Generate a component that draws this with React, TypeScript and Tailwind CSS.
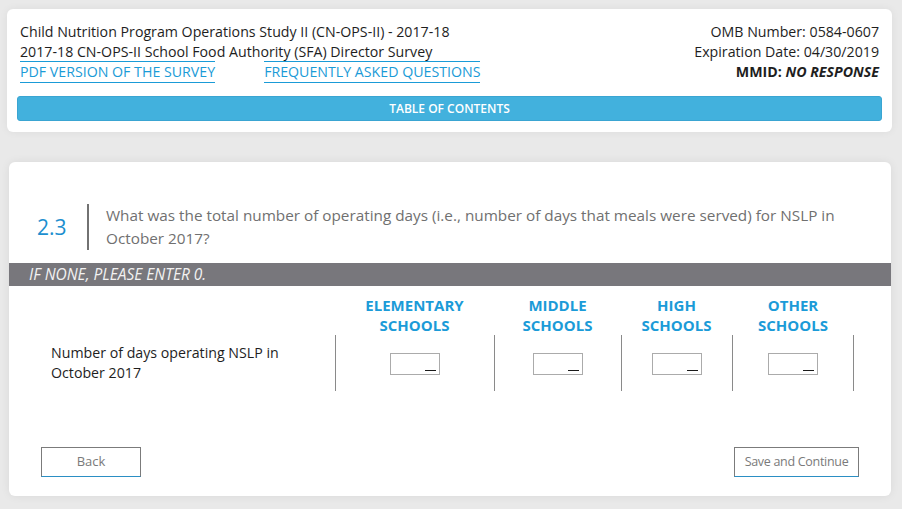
export default function App() {
  const font = { fontFamily: '"Open Sans", "Noto Sans", sans-serif' };
  const columns = [
    { top: "ELEMENTARY", width: "w-[159px]" },
    { top: "MIDDLE", width: "w-[127px]" },
    { top: "HIGH", width: "w-[111px]" },
    { top: "OTHER", width: "w-[122px]" },
  ];

  return (
    <div className="min-h-[509px] bg-[#e9e9e9] pt-[9px] pb-[14px]" style={font}>
      {/* header card */}
      <div className="ml-[7px] mr-[10px] rounded-md bg-white px-[13px] pt-[13px] pb-[11px] shadow-[0_0_8px_rgba(0,0,0,0.06)]">
        <div className="flex justify-between text-[14.2px] leading-[20px] text-[#1e1e1e]">
          <div>
            <div>Child Nutrition Program Operations Study II (CN-OPS-II) - 2017-18</div>
            <div className="h-[19px]">2017-18 CN-OPS-II School Food Authority (SFA) Director Survey</div>
            <div className="flex gap-[49px]">
              <a className="border-y border-[#1a9bd7] text-[#1a9bd7]" href="#">
                PDF VERSION OF THE SURVEY
              </a>
              <a className="border-y border-[#1a9bd7] text-[#1a9bd7]" href="#">
                FREQUENTLY ASKED QUESTIONS
              </a>
            </div>
          </div>
          <div className="text-right">
            <div>OMB Number: 0584-0607</div>
            <div>Expiration Date: 04/30/2019</div>
            <div className="font-bold">
              MMID: <span className="italic">NO RESPONSE</span>
            </div>
          </div>
        </div>
        <button
          type="button"
          className="-mx-[3px] mt-[13px] flex h-[25px] w-[calc(100%+6px)] items-center justify-center rounded-[3px] border border-[#3aa5d2] bg-[#42b1dd] text-[12px] font-semibold text-white"
        >
          TABLE OF CONTENTS
        </button>
      </div>

      {/* question card */}
      <div className="ml-[9px] mr-[11px] mt-[30px] rounded-md bg-white pt-[42px] pb-[19px] shadow-[0_0_10px_rgba(0,0,0,0.07)]">
        <div className="flex items-center pl-[28px]">
          <div className="w-[31px] text-[21px] leading-none text-[#1d8fcf]">2.3</div>
          <div className="ml-[19px] h-[46px] w-[2px] bg-[#727272]" />
          <div className="pl-[17px] text-[15.3px] leading-[23px] text-[#707070]">
            What was the total number of operating days (i.e., number of days that meals were served) for NSLP in
            <br />
            October 2017?
          </div>
        </div>

        <div className="mt-[13px] flex h-[23px] items-center bg-[#78777c] pl-[20px] text-[15.5px] italic text-[#f2f2f2]">
          IF NONE, PLEASE ENTER 0.
        </div>

        <div className="mt-[9px] flex">
          <div className="w-[326px] shrink-0" />
          {columns.map((c) => (
            <div
              key={c.top}
              className={`${c.width} shrink-0 text-center text-[15px] font-bold leading-[20px] text-[#1b9bd8]`}
            >
              <div>{c.top}</div>
              <div>SCHOOLS</div>
            </div>
          ))}
        </div>

        <div className="flex h-[56px]">
          <div className="flex w-[326px] shrink-0 items-center pl-[42px] text-[14.2px] leading-[20px] text-[#1e1e1e]">
            <div>
              Number of days operating NSLP in
              <br />
              October 2017
            </div>
          </div>
          {columns.map((c, i) => (
            <div
              key={c.top}
              className={`${c.width} flex shrink-0 items-center justify-center border-l border-[#8a8a8a] ${
                i === columns.length - 1 ? "border-r" : ""
              }`}
            >
              <div className="relative mt-[1px] h-[22px] w-[50px] border border-[#ababab] bg-white">
                <span className="absolute right-[3px] bottom-[3px] h-[1px] w-[11px] bg-[#1a1a1a]" />
              </div>
            </div>
          ))}
        </div>

        <div className="mt-[56px] flex justify-between px-[32px]">
          <button
            type="button"
            className="h-[30px] w-[100px] border border-[#7b7b7b] border-b-[#2b8fc4] bg-white text-[13px] text-[#7a7a7a]"
          >
            Back
          </button>
          <button
            type="button"
            className="h-[30px] w-[125px] border border-[#7b7b7b] border-b-[#2b8fc4] bg-white text-[12.5px] tracking-[-0.3px] text-[#7a7a7a]"
          >
            Save and Continue
          </button>
        </div>
      </div>
    </div>
  );
}
